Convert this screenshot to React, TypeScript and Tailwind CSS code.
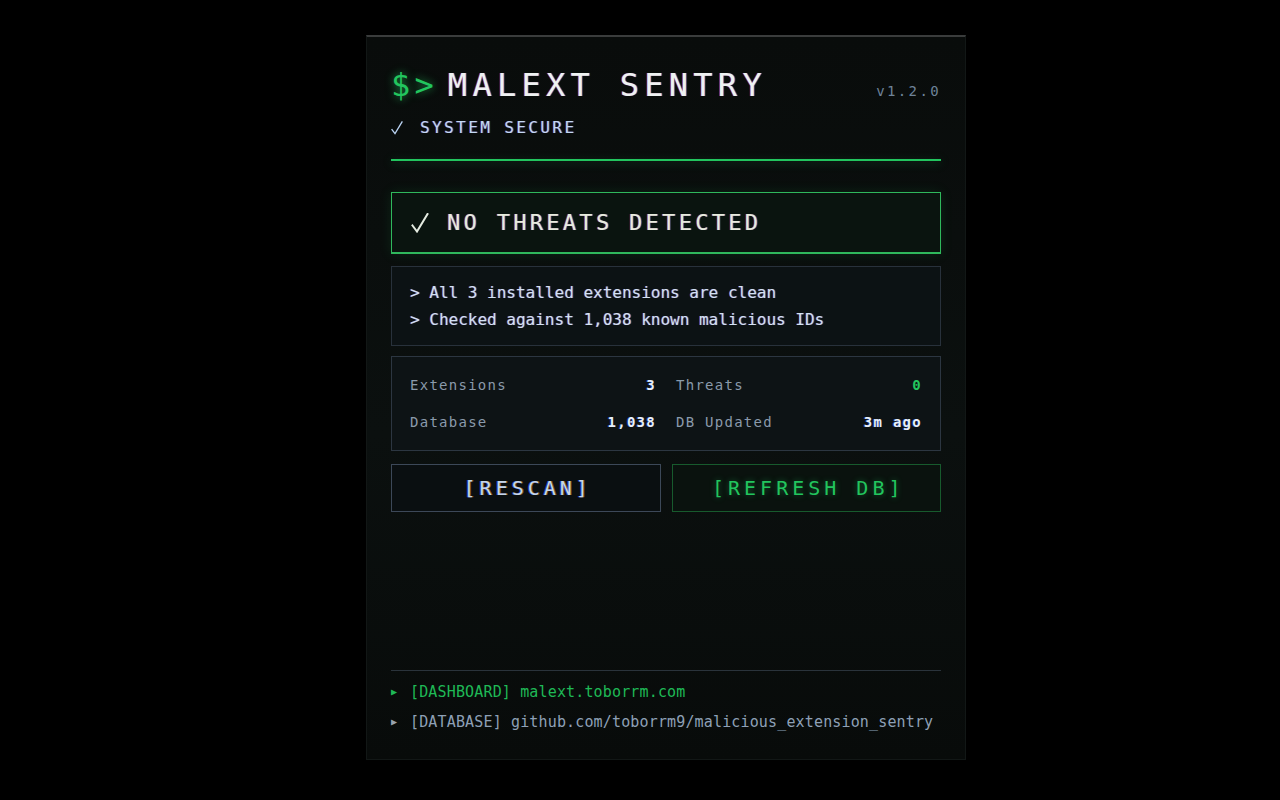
import React from 'react'

const mono = { fontFamily: '"DejaVu Sans Mono", "Liberation Mono", monospace' }

const stats = [
  { label: 'Extensions', value: '3' },
  { label: 'Threats', value: '0', ok: true },
  { label: 'Database', value: '1,038' },
  { label: 'DB Updated', value: '3m ago' },
]

function Check({ className }: { className?: string }) {
  return (
    <svg viewBox="0 0 18 20" fill="none" className={className}>
      <path d="M1.5 12.5 L6 18.5 L16.5 1" stroke="currentColor" strokeWidth="2" strokeLinecap="square" />
    </svg>
  )
}

export default function App() {
  return (
    <div className="min-h-[800px] w-full bg-black pl-[52px] pt-[35px]" style={mono}>
      <div className="mx-auto flex h-[725px] w-[600px] flex-col border-t-2 border-[#3a3c3c] border-x border-b border-x-[#121716] border-b-[#121716] bg-[linear-gradient(180deg,#090c0b_0%,#0b100f_55%,#080b0a_100%)] px-6">
        {/* Header */}
        <div className="pt-[28px]">
          <div className="flex items-baseline justify-between">
            <h1 className="flex items-baseline text-[32px] leading-[40px] tracking-[0.165em]">
              <span className="mr-[10px] tracking-[0.13em] text-[#22c55e] [text-shadow:0_0_8px_rgba(34,197,94,0.7)]">$&gt;</span>
              <span className="text-[#eef2f2] [text-shadow:-1px_0_rgba(255,40,40,0.5),1px_0_rgba(40,110,255,0.6)]">
                MALEXT SENTRY
              </span>
            </h1>
            <span className="text-[14px] tracking-[0.17em] text-[#6e8399]">v1.2.0</span>
          </div>
          <div className="mt-[13px] flex items-center text-[16px] leading-[20px] tracking-[0.15em] text-[#c4d8f2] [text-shadow:-1px_0_rgba(255,40,40,0.25),1px_0_rgba(40,110,255,0.5)]">
            <Check className="mr-[17px] h-[14px] w-[12px] text-[#b9d2f2]" />
            SYSTEM SECURE
          </div>
        </div>

        <div className="mt-[21px] h-[2px] bg-[#22c55e] shadow-[0_2px_10px_rgba(34,197,94,0.35)]" />

        {/* Status */}
        <div className="mt-[31px] flex h-[62px] items-center border border-[#2fb85c] bg-[#0a140f] px-[18px] shadow-[inset_0_-1px_0_#2fb85c,0_0_12px_rgba(34,197,94,0.12)]">
          <span className="flex items-center text-[22px] leading-[28px] tracking-[0.15em] text-[#e7ecdd] [text-shadow:-1px_0_rgba(255,40,40,0.45),1px_0_rgba(40,110,255,0.6)]">
            <Check className="ml-[1px] mr-[18px] h-[20px] w-[18px] text-[#e4ebe0]" />
            NO THREATS DETECTED
          </span>
        </div>

        <div className="mt-[12px] flex h-[80px] flex-col justify-center border border-[#28313b] bg-[#0c1214] px-[18px] text-[16px] leading-[27px] text-[#d3e2f3] [text-shadow:-1px_0_rgba(255,40,40,0.3),1px_0_rgba(40,110,255,0.45)]">
          <p>&gt; All 3 installed extensions are clean</p>
          <p>&gt; Checked against 1,038 known malicious IDs</p>
        </div>

        {/* Stats */}
        <div className="mt-[10px] grid h-[95px] grid-cols-2 content-center gap-x-[20px] gap-y-[17px] border border-[#2c3641] bg-[#0d1315] px-[18px]">
          {stats.map(s => (
            <div key={s.label} className="flex items-center justify-between text-[14px] leading-[20px] tracking-[0.09em]">
              <span className="text-[#8a9aab]">{s.label}</span>
              <span
                className={
                  s.ok
                    ? 'font-semibold text-[#22c55e]'
                    : 'font-semibold text-[#e6eef8] [text-shadow:-1px_0_rgba(40,80,255,0.5)]'
                }
              >
                {s.value}
              </span>
            </div>
          ))}
        </div>

        {/* Actions */}
        <div className="mt-[13px] grid grid-cols-2 gap-[11px]">
          <button className="h-[48px] border border-[#3c4858] bg-[#0a0f11] pl-[4px] text-[20px] tracking-[0.2em] text-[#c7d5e6] [text-shadow:-1px_0_rgba(60,90,255,0.7),1px_0_rgba(255,170,40,0.45)]">
            [RESCAN]
          </button>
          <button className="h-[48px] border border-[#175a2d] bg-[#0a120e] pl-[4px] text-[20px] tracking-[0.2em] text-[#22c55e] [text-shadow:0_0_6px_rgba(34,197,94,0.45)]">
            [REFRESH DB]
          </button>
        </div>

        {/* Footer */}
        <div className="mt-auto border-t border-[#2a333b] pb-[22px] pt-[6px] text-[15px] leading-[30px] tracking-[0.01em]">
          <p className="flex items-center text-[#1fb956]">
            <span className="w-[19px] text-[10px]">▶</span>
            [DASHBOARD] malext.toborrm.com
          </p>
          <p className="flex items-center text-[#8ea0b6]">
            <span className="w-[19px] text-[10px] text-[#9aa3ad]">▶</span>
            [DATABASE] github.com/toborrm9/malicious_extension_sentry
          </p>
        </div>
      </div>
    </div>
  )
}
